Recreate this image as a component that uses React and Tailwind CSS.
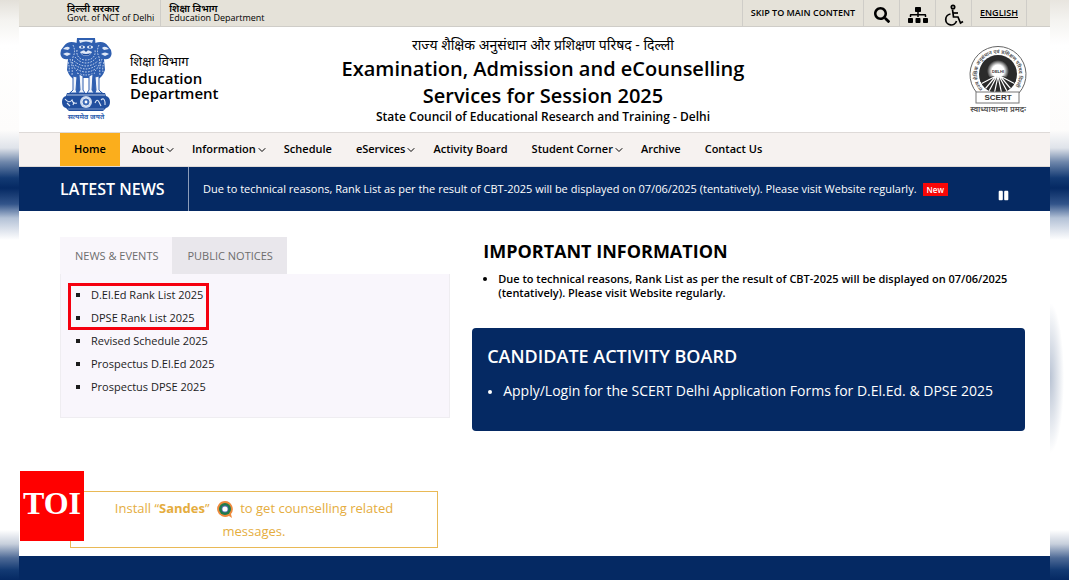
import React, { useState } from "react";
import { FaSearch, FaSitemap, FaPause } from "react-icons/fa";
import { FiChevronDown } from "react-icons/fi";

const menu = [
  { label: "Home", active: true },
  { label: "About", dropdown: true },
  { label: "Information", dropdown: true },
  { label: "Schedule" },
  { label: "eServices", dropdown: true },
  { label: "Activity Board" },
  { label: "Student Corner", dropdown: true },
  { label: "Archive" },
  { label: "Contact Us" },
];

const tabs = ["NEWS & EVENTS", "PUBLIC NOTICES"];

const newsItems = [
  "D.El.Ed Rank List 2025",
  "DPSE Rank List 2025",
  "Revised Schedule 2025",
  "Prospectus D.El.Ed 2025",
  "Prospectus DPSE 2025",
];

const Emblem = () => (
  <svg viewBox="0 0 52 88" className="h-[88px] w-[52px] shrink-0" role="img" aria-label="State emblem">
    {/* side lions */}
    <g fill="#2f5fb0">
      <path d="M17 6 Q8 3 4 9 Q-1 14 1 19 Q3 23 8 22 L7 33 Q10 41 14 42 L13 53 L9 56 L20 56 L20 20Z" />
      <path d="M35 6 Q44 3 48 9 Q53 14 51 19 Q49 23 44 22 L45 33 Q42 41 38 42 L39 53 L43 56 L32 56 L32 20Z" />
      <path d="M17 1 H35 L36 12 Q42 22 38 32 L34 41 H18 L14 32 Q10 22 16 12Z" />
    </g>
    {/* faces */}
    <g fill="#dfe8f7">
      <path d="M19 3 H33 L32 6 Q26 3 20 6Z" />
      <ellipse cx="22" cy="10" rx="3" ry="1.6" />
      <ellipse cx="30" cy="10" rx="3" ry="1.6" />
      <path d="M20 15 Q26 11 32 15 Q30 19 26 19 Q22 19 20 15Z" />
      <path d="M3 12 Q7 8 10 11 L8 13Z M49 12 Q45 8 42 11 L44 13Z" />
      <path d="M3 17 Q7 14 11 17 L7 19Z M49 17 Q45 14 41 17 L45 19Z" />
    </g>
    <g fill="#1c4a9c">
      <circle cx="22" cy="10" r="1" />
      <circle cx="30" cy="10" r="1" />
      <path d="M24 13 H28 L26 15Z" />
      <path d="M21 16 Q26 18 31 16 L29 18 Q26 19 23 18Z" />
    </g>
    {/* manes */}
    <g fill="none" stroke="#dfe8f7" strokeWidth="0.9" strokeDasharray="1.6 1.3">
      <path d="M13 8 Q16 14 13 20 Q11 28 17 34" />
      <path d="M39 8 Q36 14 39 20 Q41 28 35 34" />
      <path d="M17 13 Q16 19 21 22 Q26 24 31 22 Q36 19 35 13" />
      <path d="M15 20 Q20 26 26 26 Q32 26 37 20" />
      <path d="M14 24 Q20 29 26 29 Q32 29 38 24" />
      <path d="M15 28 Q21 32 26 32 Q31 32 37 28" />
      <path d="M17 32 Q21 35 26 35 Q31 35 35 32" />
      <path d="M17 36 Q22 38 26 38 Q30 38 35 36" />
      <path d="M10 22 Q13 29 12 38 M42 22 Q39 29 40 38" />
      <path d="M8 25 Q10 31 9 35 M44 25 Q42 31 43 35" />
    </g>
    {/* legs */}
    <g fill="#eef3fb" stroke="#2f5fb0" strokeWidth="1">
      <path d="M19 37 L23 39 L23 53 L25 56 H18 L20 53Z" />
      <path d="M33 37 L29 39 L29 53 L27 56 H34 L32 53Z" />
      <path d="M13 39 L17 40 L16 53 L17 56 H10 L13 53Z" />
      <path d="M39 39 L35 40 L36 53 L35 56 H42 L39 53Z" />
    </g>
    {/* abacus */}
    <path d="M7 56 H45 L46 59 Q50 60 50 65 Q50 70 46 71 L43 74 H9 L6 71 Q2 70 2 65 Q2 60 6 59Z" fill="#214f9f" />
    <path d="M7 58 H45" stroke="#dfe8f7" strokeWidth="0.8" />
    <path d="M8 72 H44" stroke="#8fabd9" strokeWidth="0.8" />
    <circle cx="26" cy="65" r="6" fill="#c8d6ee" />
    <circle cx="26" cy="65" r="4" fill="#3f6cb8" stroke="#fff" strokeWidth="0.8" />
    <circle cx="26" cy="65" r="1.4" fill="#fff" />
    <path
      d="M5 62 Q9 67 12 63 Q13 67 17 66 M7 66 L10 69 M13 68 L14 65 M35 66 Q37 61 39 65 L41 69 M41 63 Q44 60 45 65 L45 68"
      fill="none"
      stroke="#dfe8f7"
      strokeWidth="1.1"
    />
    <text x="26" y="82" textAnchor="middle" fontSize="7" fontWeight="700" fill="#2f5fb0" fontFamily="'Noto Sans Devanagari', 'Noto Sans', sans-serif">
      सत्यमेव जयते
    </text>
  </svg>
);

const ScertLogo = () => (
  <svg viewBox="0 0 60 72" className="h-[72px] w-[60px] shrink-0" role="img" aria-label="SCERT">
    <defs>
      <path id="ring" d="M15 44 A21 21 0 1 1 45 44" />
      <radialGradient id="sun">
        <stop offset="0.55" stopColor="#fff" />
        <stop offset="1" stopColor="#2b2b2b" />
      </radialGradient>
      <clipPath id="disc">
        <circle cx="30" cy="29" r="19" />
      </clipPath>
    </defs>
    <path d="M9 48 A28 28 0 1 1 51 48" fill="#fff" stroke="#666" strokeWidth="1" />
    <text fontSize="5" fontWeight="600" fill="#444" fontFamily="'Noto Sans Devanagari', 'Noto Sans', sans-serif">
      <textPath href="#ring">राज्य शैक्षिक अनुसंधान एवं प्रशिक्षण परिषद दिल्ली</textPath>
    </text>
    <g clipPath="url(#disc)">
      <rect x="10" y="10" width="40" height="40" fill="#2b2b2b" />
      <circle cx="30" cy="26" r="11" fill="url(#sun)" />
      <path d="M10 36 Q30 26 50 36 V50 H10Z" fill="#2b2b2b" />
      <path
        d="M28 31 L7 42 M28 31 L12 50 M29 31 L19 50 M30 31 L26 50 M30 31 L34 50 M31 31 L41 50 M32 31 L48 50 M32 31 L53 42"
        stroke="#fff"
        strokeWidth="1.2"
      />
    </g>
    <text x="30" y="28" textAnchor="middle" fontSize="4" fontWeight="700" fill="#333" fontFamily="'Liberation Sans', sans-serif">
      DELHI
    </text>
    <rect x="8" y="47" width="43" height="11" fill="#fff" stroke="#777" strokeWidth="1" />
    <text x="30" y="55" textAnchor="middle" fontSize="8" fontWeight="700" fill="#333" fontFamily="'Liberation Sans', sans-serif">
      SCERT
    </text>
    <text x="30" y="67" textAnchor="middle" fontSize="8" fontWeight="600" fill="#555" fontFamily="'Noto Sans Devanagari', 'Noto Sans', sans-serif">
      स्वाध्यायान्मा प्रमदः
    </text>
  </svg>
);

const WheelchairIcon = () => (
  <svg viewBox="0 0 20 22" className="h-[22px] w-5" fill="none" stroke="currentColor" strokeWidth="1.7" aria-hidden="true">
    <circle cx="9" cy="3" r="1.7" />
    <path d="M8.5 5.5 L9.5 13 H14 L16.5 19 L19 17.5" />
    <path d="M9 9 H14" />
    <path d="M6.5 10 A5.5 5.5 0 1 0 12.5 17" />
  </svg>
);

const SandesIcon = () => (
  <svg viewBox="0 0 16 17" className="mx-1 inline-block h-[17px] w-4 align-middle" aria-hidden="true">
    <path d="M8 0 A8 8 0 1 0 12 15 L15 17 L14 13 A8 8 0 0 0 8 0Z" fill="#ef8a3c" />
    <circle cx="8" cy="8" r="6" fill="#1f7a4d" />
    <circle cx="8" cy="8" r="3.4" fill="#5b6fb5" />
    <circle cx="8" cy="8" r="2.6" fill="#fff" />
  </svg>
);

const TopBar = () => (
  <div className="flex h-[27px] justify-between border-b border-[#cfcdc8] bg-[#e5e2d9] pl-10 pr-[23px] text-black">
    <div className="flex text-[9px] font-medium leading-[10px]">
      <div className="border-r border-[#cfcdc8] pl-2 pr-[6px] pt-[3px]">
        <p className="text-[10px] font-semibold leading-[10px]">दिल्ली सरकार</p>
        <p>Govt. of NCT of Delhi</p>
      </div>
      <div className="px-2 pt-[3px]">
        <p className="text-[10px] font-semibold leading-[10px]">शिक्षा विभाग</p>
        <p>Education Department</p>
      </div>
    </div>
    <div className="flex divide-x divide-[#cfcdc8] border-x border-[#cfcdc8] text-[9px] font-semibold">
      <a href="#main" className="flex items-center px-2">
        SKIP TO MAIN CONTENT
      </a>
      <button aria-label="Search" className="flex w-9 items-center justify-center pt-1">
        <FaSearch className="size-4" />
      </button>
      <button aria-label="Sitemap" className="flex w-9 items-center justify-center pt-1">
        <FaSitemap className="size-5" />
      </button>
      <button aria-label="Accessibility" className="flex w-9 items-center justify-center pt-1">
        <WheelchairIcon />
      </button>
      <a href="#english" className="flex items-center px-2 underline">
        ENGLISH
      </a>
    </div>
  </div>
);

const Header = () => (
  <header className="flex h-[105px] items-start justify-between bg-white pl-[41px] pr-[22px]">
    <div className="flex w-[230px] pt-[10px]">
      <Emblem />
      <div className="pl-[18px] pt-[14px]">
        <p className="text-[13px] leading-5">शिक्षा विभाग</p>
        <p className="text-[15px] font-semibold leading-[15px]">
          Education
          <br />
          Department
        </p>
      </div>
    </div>
    <div className="pt-2 text-center text-black">
      <p className="text-[14px] leading-5">राज्य शैक्षिक अनुसंधान और प्रशिक्षण परिषद - दिल्ली</p>
      <h1 className="text-[20px] font-semibold leading-[27px]">
        Examination, Admission and eCounselling
        <br />
        Services for Session 2025
      </h1>
      <p className="text-[12px] font-semibold leading-4">State Council of Educational Research and Training - Delhi</p>
    </div>
    <div className="flex w-[232px] justify-end pt-[18px]">
      <ScertLogo />
    </div>
  </header>
);

const NavBar = () => (
  <nav className="flex h-[35px] border-y border-[#dedad8] bg-[#f6f2f0] pl-[41px] text-[11px] font-semibold text-black">
    {menu.map((item) => (
      <a
        key={item.label}
        href="#"
        className={
          item.active
            ? "flex items-center bg-[#fbae1c] px-[14px]"
            : item.dropdown
              ? "flex items-center pl-3 pr-1"
              : "flex items-center px-3"
        }
      >
        {item.label}
        {item.dropdown && <FiChevronDown className="size-3" strokeWidth={2} />}
      </a>
    ))}
  </nav>
);

const NewsBar = () => (
  <div className="flex h-11 bg-[#052963] pl-[41px] pr-[41px] text-white">
    <h2 className="flex w-[129px] items-center border-r border-[#8c9cb9] text-[16px] font-semibold">LATEST NEWS</h2>
    <p className="flex flex-1 items-center pl-[14px] text-[11px]">
      Due to technical reasons, Rank List as per the result of CBT-2025 will be displayed on 07/06/2025 (tentatively). Please visit Website regularly.
      <span className="ml-[6px] bg-[#f90606] px-1 text-[8px] font-semibold leading-[13px]">New</span>
    </p>
    <button aria-label="Pause" className="pt-3">
      <FaPause className="size-[11px]" />
    </button>
  </div>
);

const App = () => {
  const [activeTab, setActiveTab] = useState(0);

  return (
    <div className="flex min-h-screen bg-white font-['Open_Sans','Noto_Sans_Devanagari',sans-serif]">
      <div className="w-[19px] shrink-0 bg-[linear-gradient(to_bottom,#e3e0d9_0px,#f4f3f0_20px,#fff_45px,#fdfcfb_130px,#dfe3ea_148px,#6f87ab_162px,#133a73_178px,#052963_188px,#32548a_204px,#b3c1d6_218px,#fff_240px,#fff_530px,#c7cfdc_544px,#4e6a96_558px,#133a73_570px,#052963_580px)]" />

      <div className="flex min-w-0 flex-1 flex-col">
        <TopBar />
        <Header />
        <NavBar />
        <NewsBar />

        <main id="main" className="grid grid-cols-[12fr_17fr] gap-[22px] pl-[41px] pr-[25px] pt-[26px]">
          <section>
            <div className="flex text-[11px] text-[#6d6d6d]">
              {tabs.map((tab, i) => (
                <button
                  key={tab}
                  onClick={() => setActiveTab(i)}
                  className={
                    i === activeTab
                      ? "h-[37px] bg-[#f9f6fb] pl-[15px] pr-[14px] pt-[2px]"
                      : "h-[37px] bg-[#e9e7ec] pl-[15px] pr-[14px] pt-[2px]"
                  }
                >
                  {tab}
                </button>
              ))}
            </div>
            <div className="relative h-36 border border-t-0 border-[#efedf1] bg-[#f9f6fc] pt-[9px]">
              <ul className="list-[square] pl-[30px] text-[11px] leading-[23px] text-[#1c1c1c]">
                {newsItems.map((item) => (
                  <li key={item}>
                    <a href="#">{item}</a>
                  </li>
                ))}
              </ul>
              {/* highlight round the two rank lists */}
              <div className="absolute left-[7px] top-[9px] h-[47px] w-[141px] border-[3px] border-[#f5000f]" />
            </div>
          </section>

          <section className="text-black">
            <h2 className="pl-[11px] text-[18px] font-bold leading-7">IMPORTANT INFORMATION</h2>
            <ul className="list-disc pl-[26px] pt-[7px] text-[11px] font-semibold leading-[14px]">
              <li>
                Due to technical reasons, Rank List as per the result of CBT-2025 will be displayed on 07/06/2025 (tentatively). Please visit Website regularly.
              </li>
            </ul>
            <div className="mt-7 h-[103px] rounded bg-[#052963] px-[15px] pt-[14px] text-white">
              <h2 className="text-[18px] font-semibold leading-7">CANDIDATE ACTIVITY BOARD</h2>
              <ul className="list-disc pl-4 pt-[11px] text-[14px] leading-5 marker:text-[11px]">
                <li>
                  <a href="#">Apply/Login for the SCERT Delhi Application Forms for D.El.Ed. &amp; DPSE 2025</a>
                </li>
              </ul>
            </div>
          </section>
        </main>

        <div className="relative mt-10 pl-[51px] pt-5">
          <div className="absolute left-px top-0 flex h-[70px] w-16 items-center justify-center bg-[#ff0000] pb-[6px] font-['Liberation_Serif',serif] text-[32px] font-bold text-white">
            TOI
          </div>
          <a
            href="#"
            className="block w-[368px] border border-[#e9b956] px-9 pb-1 pt-[5px] text-center text-[13px] leading-[23px] text-[#e5ad3e]"
          >
            Install “<b>Sandes</b>” <SandesIcon /> to get counselling related messages.
          </a>
        </div>

        <footer className="mt-2 min-h-6 flex-1 bg-[#052963]" />
      </div>

      <div className="w-[19px] shrink-0 bg-[radial-gradient(ellipse_14px_75px_at_0px_378px,#b9c3d3,transparent),linear-gradient(to_bottom,#e8e5df_0px,#f4f3f0_20px,#fff_45px,#fdfcfb_130px,#dfe3ea_148px,#6f87ab_162px,#133a73_178px,#052963_188px,#32548a_204px,#b3c1d6_218px,#fff_240px,#fff_530px,#c7cfdc_544px,#4e6a96_558px,#133a73_570px,#052963_580px)]" />
    </div>
  );
};

export default App;
